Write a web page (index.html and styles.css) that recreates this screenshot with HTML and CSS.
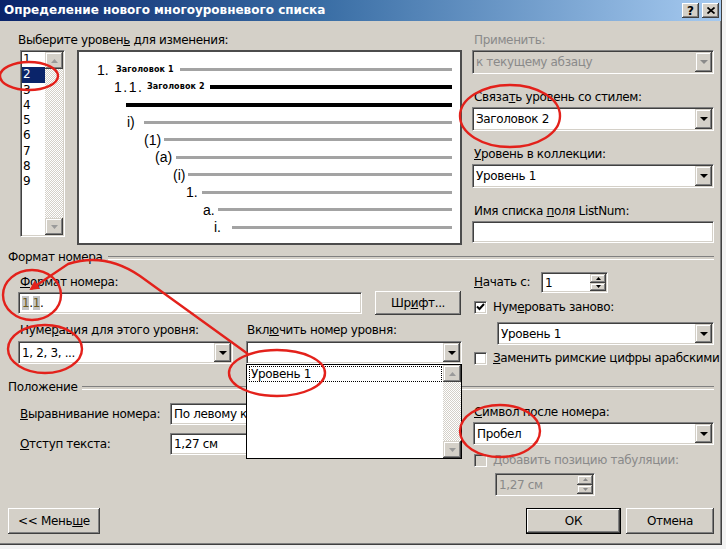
FILE: index.html
```html
<!DOCTYPE html>
<html lang="ru">
<head>
<meta charset="utf-8">
<title>Определение нового многоуровневого списка</title>
<link rel="stylesheet" href="styles.css">
</head>
<body>
<div class="dialog">
  <div class="titlebar">
    <span class="title">Определение нового многоуровневого списка</span>
    <div class="tbtns">
      <span class="tbtn">?</span>
      <span class="tbtn"><svg width="8" height="7" viewBox="0 0 8 7"><path d="M0.5 0.5L7.5 6.5M7.5 0.5L0.5 6.5" stroke="#000" stroke-width="1.7"/></svg></span>
    </div>
  </div>

  <div class="content">
    <div class="sec top">
      <div class="top-left">
        <div class="lbl ind">Выберите уровен<u>ь</u> для изменения:</div>
        <div class="lvrow">
          <div class="levels sunken">
            <div class="items">
              <div class="it">1</div>
              <div class="it sel">2</div>
              <div class="it">3</div>
              <div class="it">4</div>
              <div class="it">5</div>
              <div class="it">6</div>
              <div class="it">7</div>
              <div class="it">8</div>
              <div class="it">9</div>
            </div>
            <div class="vscroll">
              <span class="sbtn"><svg width="7" height="4" viewBox="0 0 7 4"><path d="M0 4h7L3.5 0z" fill="#9a9a9a"/></svg></span>
              <span class="track"></span>
              <span class="sbtn"><svg width="7" height="4" viewBox="0 0 7 4"><path d="M0 0h7L3.5 4z" fill="#9a9a9a"/></svg></span>
            </div>
          </div>
          <div class="preview">
            <div class="prow r1"><span class="num">1.</span><span class="cap">Заголовок 1</span><span class="bar"></span></div>
            <div class="prow r2"><span class="num">1.1.</span><span class="cap">Заголовок 2</span><span class="bar blk"></span></div>
            <div class="prow r3"><span class="bar blk"></span></div>
            <div class="prow r4"><span class="num">i)</span><span class="bar"></span></div>
            <div class="prow r5"><span class="num">(1)</span><span class="bar"></span></div>
            <div class="prow r6"><span class="num">(a)</span><span class="bar"></span></div>
            <div class="prow r7"><span class="num">(i)</span><span class="bar"></span></div>
            <div class="prow r8"><span class="num">1.</span><span class="bar"></span></div>
            <div class="prow r9"><span class="num">a.</span><span class="bar"></span></div>
            <div class="prow r10"><span class="num">i.</span><span class="bar"></span></div>
          </div>
        </div>
      </div>

      <div class="top-right">
        <div class="fld">
          <div class="lbl dis">Применить:</div>
          <div class="combo dis"><span class="val">к текущему абзацу</span><span class="dbtn"><svg width="8" height="4" viewBox="0 0 8 4"><path d="M0 0h8L4 4z" fill="#8a8a8a"/></svg></span></div>
        </div>
        <div class="fld">
          <div class="lbl">Связа<u>т</u>ь уровень со стилем:</div>
          <div class="combo"><span class="val">Заголовок 2</span><span class="dbtn"><svg width="8" height="4" viewBox="0 0 8 4"><path d="M0 0h8L4 4z"/></svg></span></div>
        </div>
        <div class="fld">
          <div class="lbl"><u>У</u>ровень в коллекции:</div>
          <div class="combo"><span class="val">Уровень 1</span><span class="dbtn"><svg width="8" height="4" viewBox="0 0 8 4"><path d="M0 0h8L4 4z"/></svg></span></div>
        </div>
        <div class="fld">
          <div class="lbl">Имя списка <u>п</u>оля ListNum:</div>
          <div class="tbox wide"></div>
        </div>
      </div>
    </div>

    <div class="group g1"><span>Формат номера</span></div>

    <div class="sec fmt">
      <div class="fmt-left">
        <div class="lbl first"><u>Ф</u>ормат номера:</div>
        <div class="fmtrow">
          <div class="tbox fmtbox"><span class="fs">1</span>.<span class="fs">1</span>.</div>
          <span class="btn font">Шр<u>и</u>фт...</span>
        </div>
        <div class="numrow">
          <div>
            <div class="lbl">Нуме<u>р</u>ация для этого уровня:</div>
            <div class="combo"><span class="val">1, 2, 3, ...</span><span class="dbtn"><svg width="8" height="4" viewBox="0 0 8 4"><path d="M0 0h8L4 4z"/></svg></span></div>
          </div>
          <div>
            <div class="lbl tight">Вкл<u>ю</u>чить номер уровня:</div>
            <div class="combo"><span class="val"></span><span class="dbtn"><svg width="8" height="4" viewBox="0 0 8 4"><path d="M0 0h8L4 4z"/></svg></span></div>
          </div>
        </div>
      </div>
      <div class="fmt-right">
        <div class="startrow">
          <span class="lbl startlbl"><u>Н</u>ачать с:</span>
          <div class="tbox spin"><span class="val">1</span><span class="spbtns"><span class="spb"><svg width="5" height="3" viewBox="0 0 5 3"><path d="M0 3h5L2.5 0z"/></svg></span><span class="spb"><svg width="5" height="3" viewBox="0 0 5 3"><path d="M0 0h5L2.5 3z"/></svg></span></span></div>
        </div>
        <div class="chk-row">
          <span class="cbox"><svg width="9" height="8" viewBox="0 0 9 8"><path d="M1 3.5L3.5 6L8 1" fill="none" stroke="#000" stroke-width="2"/></svg></span>
          <span>Нум<u>е</u>ровать заново:</span>
        </div>
        <div class="combo restart"><span class="val">Уровень 1</span><span class="dbtn"><svg width="8" height="4" viewBox="0 0 8 4"><path d="M0 0h8L4 4z"/></svg></span></div>
        <div class="chk-row second">
          <span class="cbox"></span>
          <span><u>З</u>аменить римские цифры арабскими</span>
        </div>
      </div>
    </div>

    <div class="group g2"><span>Положение</span></div>

    <div class="sec pos">
      <div class="pos-left">
        <div class="posrow">
          <span class="lbl poslbl"><u>В</u>ыравнивание номера:</span>
          <div class="combo"><span class="val">По левому краю</span><span class="dbtn"><svg width="8" height="4" viewBox="0 0 8 4"><path d="M0 0h8L4 4z"/></svg></span></div>
        </div>
        <div class="posrow">
          <span class="lbl poslbl"><u>О</u>тступ текста:</span>
          <div class="tbox"><span>1,27 см</span></div>
        </div>
      </div>
      <div class="pos-right">
        <div class="lbl"><u>С</u>имвол после номера:</div>
        <div class="combo"><span class="val">Пробел</span><span class="dbtn"><svg width="8" height="4" viewBox="0 0 8 4"><path d="M0 0h8L4 4z"/></svg></span></div>
        <div class="chk-row dis">
          <span class="cbox dis"></span>
          <span><u>Д</u>обавить позицию табуляции:</span>
        </div>
        <div class="tbox spin dis tabspin"><span class="val">1,27 см</span><span class="spbtns"><span class="spb"><svg width="5" height="3" viewBox="0 0 5 3"><path d="M0 3h5L2.5 0z" fill="#8a8a8a"/></svg></span><span class="spb"><svg width="5" height="3" viewBox="0 0 5 3"><path d="M0 0h5L2.5 3z" fill="#8a8a8a"/></svg></span></span></div>
      </div>
    </div>

    <div class="footer">
      <span class="btn less">&lt;&lt; Мень<u>ш</u>е</span>
      <span class="btn ok">ОК</span>
      <span class="btn cancel">Отмена</span>
    </div>
  </div>

  <div class="ddlist">
    <div class="opts"><div class="opt">Уровень 1</div></div>
    <div class="vscroll">
      <span class="sbtn"><svg width="7" height="4" viewBox="0 0 7 4"><path d="M0 4h7L3.5 0z" fill="#9a9a9a"/></svg></span>
      <span class="track"></span>
      <span class="sbtn"><svg width="7" height="4" viewBox="0 0 7 4"><path d="M0 0h7L3.5 4z" fill="#9a9a9a"/></svg></span>
    </div>
  </div>

  <svg class="annot" width="726" height="549" viewBox="0 0 726 549">
    <defs>
      <marker id="ah" viewBox="0 0 10 10" refX="8" refY="5" markerWidth="4" markerHeight="4" orient="auto">
        <path d="M0 0L10 5L0 10z" fill="#e3211b"/>
      </marker>
    </defs>
    <g fill="none" stroke="#e3211b" stroke-width="2.4">
      <ellipse cx="29" cy="76" rx="29" ry="14"/>
      <ellipse cx="510" cy="116" rx="50" ry="31"/>
      <ellipse cx="32" cy="295" rx="29" ry="25"/>
      <ellipse cx="45" cy="349" rx="37" ry="24"/>
      <ellipse cx="277" cy="373" rx="48" ry="23"/>
      <ellipse cx="500" cy="431" rx="40" ry="26"/>
      <path d="M248 354L140 276Q105 252 68 264L31 289" marker-end="url(#ah)"/>
    </g>
  </svg>
</div>
</body>
</html>
```

FILE: styles.css
```css
* { box-sizing: border-box; }
html, body { margin: 0; padding: 0; }
body {
  width: 726px;
  height: 549px;
  overflow: hidden;
  background: #f2f2f2;
  font-family: "DejaVu Sans", "Liberation Sans", sans-serif;
  font-size: 12px;
  letter-spacing: -0.35px;
  color: #000;
}
u { text-decoration: underline; text-underline-offset: 1px; }

.dialog {
  position: relative;
  width: 722px;
  height: 545px;
  background: #d4d0c8;
  border-right: 1px solid #404040;
  border-bottom: 1px solid #404040;
  box-shadow: inset -1px -1px 0 #808080;
}

/* title bar */
.titlebar {
  height: 21px;
  display: flex;
  align-items: center;
  justify-content: space-between;
  padding: 0 2px 0 4px;
  background: linear-gradient(to right, #0a246a 0%, #3a6ea5 45%, #a6caf0 100%);
}
.title { color: #fff; font-weight: bold; font-size: 12px; line-height: 15px; white-space: nowrap; letter-spacing: 0; }
.tbtns { display: flex; gap: 3px; }
.tbtn {
  width: 17px;
  height: 15px;
  display: flex;
  align-items: center;
  justify-content: center;
  background: #d4d0c8;
  box-shadow: inset -1px -1px #404040, inset 1px 1px #fff, inset -2px -2px #808080;
  font-weight: bold;
  font-size: 12px;
  line-height: 1;
  letter-spacing: 0;
}

/* common */
.content { padding: 0 7px 0 8px; }
.sec { display: grid; grid-template-columns: 454px 242px; column-gap: 10px; }
.lbl { height: 15px; line-height: 15px; white-space: nowrap; }
.dis { color: #8a8a8a; }

.sunken {
  border: 1px solid;
  border-color: #808080 #fff #fff #808080;
  box-shadow: inset 1px 1px #404040, inset -1px -1px #d4d0c8;
  padding: 1px;
}
.combo, .tbox {
  border: 1px solid;
  border-color: #808080 #fff #fff #808080;
  box-shadow: inset 1px 1px #404040, inset -1px -1px #d4d0c8;
  padding: 1px;
  background: #fff;
  display: flex;
  white-space: nowrap;
  overflow: hidden;
}
.combo { height: 24px; }
.combo.dis, .tbox.dis { background: #d4d0c8; }
.combo .val, .tbox .val { flex: 1; display: flex; align-items: center; padding-left: 2px; overflow: hidden; }
.tbox { height: 22px; align-items: center; padding-left: 3px; }
.tbox.wide { margin-top: 2px; }
.dbtn {
  width: 17px;
  flex: none;
  display: flex;
  align-items: center;
  justify-content: center;
  background: #d4d0c8;
  box-shadow: inset -1px -1px #404040, inset 1px 1px #d4d0c8, inset -2px -2px #808080, inset 2px 2px #fff;
}
.btn {
  display: flex;
  align-items: center;
  justify-content: center;
  background: #d4d0c8;
  box-shadow: inset -1px -1px #404040, inset 1px 1px #fff, inset -2px -2px #808080;
  white-space: nowrap;
}

/* top section */
.top { height: 224px; padding-top: 12px; }
.ind { margin-left: 10px; }
.lvrow { display: flex; gap: 12px; margin: 2px 0 0 12px; }
.levels { width: 45px; height: 187px; display: flex; background: #fff; }
.items { width: 23px; flex: none; }
.it { height: 15.3px; line-height: 15.3px; padding-left: 1px; }
.it.sel { background: #0a246a; color: #fff; }
.vscroll { width: 18px; flex: none; display: flex; flex-direction: column; }
.sbtn {
  height: 17px;
  flex: none;
  display: flex;
  align-items: center;
  justify-content: center;
  background: #d4d0c8;
  box-shadow: inset -1px -1px #404040, inset 1px 1px #d4d0c8, inset -2px -2px #808080, inset 2px 2px #fff;
}
.track {
  flex: 1;
  background: repeating-conic-gradient(#d4d0c8 0 25%, #fff 0 50%) 0 0 / 2px 2px;
}

.preview {
  flex: 1;
  height: 195px;
  border: 2px solid #4c4c4c;
  background: #fff;
  padding: 9px 8px 0 0;
  letter-spacing: 0;
}
.prow { height: 17.5px; display: flex; align-items: center; }
.num { flex: none; font-family: "Liberation Sans", sans-serif; font-size: 14px; line-height: 1; }
.cap { flex: none; font-size: 8px; font-weight: bold; letter-spacing: 0.1px; line-height: 1; }
.bar { flex: 1; height: 3px; background: #a3a3a3; }
.bar.blk { height: 4px; background: #000; }
.r1 { padding-left: 18px; }
.r1 .num { width: 19px; }
.r1 .cap { width: 64px; }
.r2 { padding-left: 35px; }
.r2 .num { width: 33px; letter-spacing: 1.5px; }
.r2 .cap { width: 63px; }
.r3 { padding-left: 47px; }
.r4 { padding-left: 48px; }
.r4 .num { width: 17px; }
.r5 { padding-left: 65px; }
.r5 .num { width: 20px; }
.r6 { padding-left: 76px; }
.r6 .num { width: 21px; }
.r7 { padding-left: 94px; }
.r7 .num { width: 15px; }
.r8 { padding-left: 107px; }
.r8 .num { width: 16px; }
.r9 { padding-left: 124px; }
.r9 .num { width: 15px; }
.r10 { padding-left: 135px; }
.r10 .num { width: 18px; }

.top-right .lbl { padding-left: 2px; }
.fld + .fld { margin-top: 16px; }
.fld .combo { margin-top: 2px; }

/* group headers */
.group { display: flex; align-items: center; height: 15px; line-height: 15px; }
.group::after {
  content: "";
  flex: 1;
  height: 2px;
  margin-left: 5px;
  border-top: 1px solid #808080;
  border-bottom: 1px solid #fff;
}
.g1 { margin-top: 5px; }

/* format section */
.fmt { height: 115px; }
.fmt-left { padding-left: 10px; }
.fmt-left .lbl { padding-left: 2px; }
.fmt-left .lbl.first { margin-top: 10px; }
.fmtrow { display: flex; align-items: center; height: 24px; margin-top: 1px; }
.fmtbox { width: 344px; }
.fs { background: #c4c4c4; color: #6b5a1e; }
.btn.font { width: 86px; height: 24px; margin-left: 13px; }
.numrow { display: grid; grid-template-columns: 215px 216px; column-gap: 13px; margin-top: 8px; }
.numrow .lbl.tight { padding-left: 1px; }
.numrow .combo { margin-top: 3px; height: 23px; }

.fmt-right { padding-left: 1px; }
.startrow { display: flex; align-items: center; height: 21px; margin-top: 7px; }
.startlbl { width: 68px; padding-left: 1px; }
.spin { padding: 1px; }
.startrow .spin { width: 67px; height: 21px; }
.spbtns { width: 16px; flex: none; display: flex; flex-direction: column; align-self: stretch; }
.spb {
  flex: 1;
  display: flex;
  align-items: center;
  justify-content: center;
  background: #d4d0c8;
  box-shadow: inset -1px -1px #404040, inset 1px 1px #d4d0c8, inset -2px -2px #808080, inset 2px 2px #fff;
}
.chk-row { display: flex; align-items: center; gap: 6px; height: 14px; margin-top: 7px; padding-left: 1px; white-space: nowrap; }
.chk-row.second { margin-top: 6px; }
.cbox {
  width: 13px;
  height: 13px;
  flex: none;
  display: flex;
  align-items: center;
  justify-content: center;
  background: #fff;
  border: 1px solid;
  border-color: #808080 #fff #fff #808080;
  box-shadow: inset 1px 1px #404040, inset -1px -1px #d4d0c8;
}
.cbox.dis { background: #d4d0c8; }
.combo.restart { margin: 8px 0 0 24px; height: 23px; }

/* position section */
.pos { height: 101px; }
.pos-left { padding-left: 12px; }
.posrow { display: flex; align-items: center; height: 22px; margin-top: 8px; }
.poslbl { width: 150px; flex: none; }
.posrow .combo, .posrow .tbox { width: 170px; height: 22px; }
.pos-right { padding-left: 1px; }
.pos-right .lbl { margin-top: 10px; padding-left: 1px; }
.pos-right .combo { margin-top: 2px; height: 23px; }
.pos-right .chk-row { margin-top: 8px; }
.tabspin { width: 100px; height: 23px; margin: 6px 0 0 22px; }

/* footer */
.footer { display: flex; height: 26px; margin-top: 12px; }
.btn.less { width: 92px; }
.btn.ok { width: 95px; margin-left: auto; border: 1px solid #000; }
.btn.cancel { width: 88px; margin-left: 5px; }

/* open dropdown list */
.ddlist {
  position: absolute;
  left: 246px;
  top: 364px;
  width: 216px;
  height: 95px;
  border: 1px solid #000;
  background: #fff;
  display: flex;
}
.ddlist .opts { flex: 1; padding: 1px 1px 0 2px; }
.opt { height: 16px; border: 1px dotted #000; display: flex; align-items: center; padding-left: 1px; }

/* annotations */
.annot { position: absolute; left: 0; top: 0; pointer-events: none; }
```
